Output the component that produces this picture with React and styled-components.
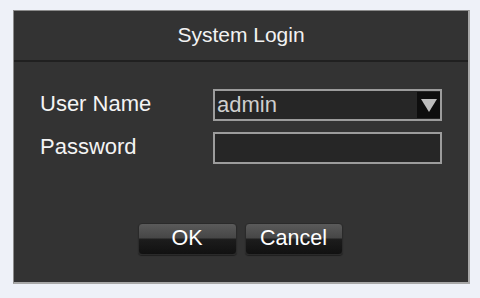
import React from "react";
import styled, { createGlobalStyle } from "styled-components";

const Global = createGlobalStyle`
  html, body { margin: 0; padding: 0; background: #eef1f8; }
  body { font-family: "Liberation Sans", Arial, sans-serif; }
`;

const Page = styled.div`
  width: 480px;
  height: 298px;
  padding: 10px 0 0 13px;
  box-sizing: border-box;
`;

const Panel = styled.div`
  width: 457px;
  height: 274px;
  box-sizing: border-box;
  background: #333333;
  border-top: 1px solid #8c8c8c;
  border-left: 1px solid #8c8c8c;
  border-right: 2px solid #a8a8a8;
  border-bottom: 2px solid #a8a8a8;
  display: flex;
  flex-direction: column;
`;

const Header = styled.div`
  height: 51px;
  display: flex;
  align-items: center;
  justify-content: center;
  color: #f2f2f2;
  font-size: 21px;
  border-bottom: 2px solid #202020;
  box-sizing: border-box;
  padding-bottom: 2px;
`;

const Form = styled.div`
  display: grid;
  grid-template-columns: 173px 229px;
  row-gap: 11px;
  padding: 27px 0 0 26px;
`;

const Label = styled.div`
  color: #f4f4f4;
  font-size: 22px;
  height: 32px;
  display: flex;
  align-items: center;
  padding-bottom: 2px;
  box-sizing: border-box;
`;

const Field = styled.div`
  height: 32px;
  box-sizing: border-box;
  border: 2px solid #9c9c9c;
  background: #262626;
  display: flex;
  align-items: stretch;
`;

const FieldText = styled.div`
  flex: 1;
  color: #cfcfcf;
  font-size: 22px;
  display: flex;
  align-items: center;
  padding-left: 2px;
  padding-bottom: 1px;
`;

const DropBtn = styled.div`
  width: 23px;
  margin: 1px 0;
  background: #0e0e0e;
  display: flex;
  align-items: center;
  justify-content: center;
`;

const Buttons = styled.div`
  display: flex;
  justify-content: center;
  gap: 8px;
  margin-top: 59px;
  padding-right: 2px;
`;

const Button = styled.button`
  width: ${(p) => p.$w}px;
  height: 32px;
  border: 1px solid #2a2a2a;
  border-radius: 4px;
  background: linear-gradient(
    to bottom,
    #5a5a5a 0%,
    #474747 45%,
    #1c1c1c 52%,
    #111111 100%
  );
  color: #ffffff;
  font-family: "Liberation Sans", Arial, sans-serif;
  font-size: 21.5px;
  padding: 0 0 2px 0;
  box-shadow: 0 1px 1px rgba(0, 0, 0, 0.4);
`;

export default function App() {
  return (
    <>
      <Global />
      <Page>
        <Panel>
          <Header>System Login</Header>
          <Form>
            <Label>User Name</Label>
            <Field>
              <FieldText>admin</FieldText>
              <DropBtn>
                <svg width="16" height="13" viewBox="0 0 16 13">
                  <polygon points="0,0 16,0 8,13" fill="#bdbdbd" />
                </svg>
              </DropBtn>
            </Field>
            <Label>Password</Label>
            <Field>
              <FieldText />
            </Field>
          </Form>
          <Buttons>
            <Button $w={99}>OK</Button>
            <Button $w={98}>Cancel</Button>
          </Buttons>
        </Panel>
      </Page>
    </>
  );
}
